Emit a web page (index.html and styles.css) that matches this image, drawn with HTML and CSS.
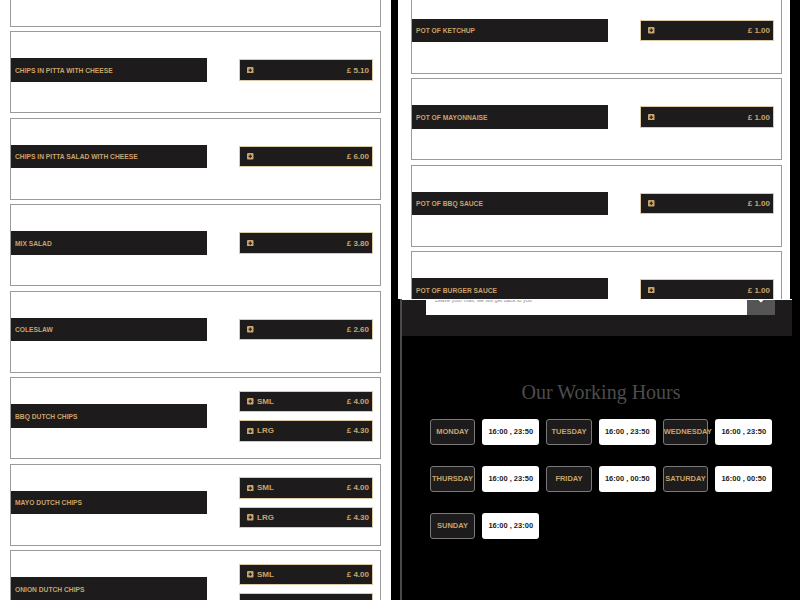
FILE: index.html
```html
<!DOCTYPE html>
<html lang="en">
<head>
<meta charset="utf-8">
<title>Menu</title>
<link rel="stylesheet" href="styles.css">
</head>
<body>
<div class="page">
  <section class="menu-left">
    <div class="list list-left">
      <div class="item"></div>
      <div class="item">
        <div class="item-name">CHIPS IN PITTA WITH CHEESE</div>
        <div class="item-prices">
          <div class="price-btn"><svg class="plus" viewBox="0 0 7 7"><rect width="7" height="7" rx="1" fill="#c9a46c"/><path d="M3.5 1.6v3.8M1.6 3.5h3.8" stroke="#1d1b1b" stroke-width="1.3"/></svg><span class="size"></span><span class="price">£ 5.10</span></div>
        </div>
      </div>
      <div class="item">
        <div class="item-name">CHIPS IN PITTA SALAD WITH CHEESE</div>
        <div class="item-prices">
          <div class="price-btn"><svg class="plus" viewBox="0 0 7 7"><rect width="7" height="7" rx="1" fill="#c9a46c"/><path d="M3.5 1.6v3.8M1.6 3.5h3.8" stroke="#1d1b1b" stroke-width="1.3"/></svg><span class="size"></span><span class="price">£ 6.00</span></div>
        </div>
      </div>
      <div class="item">
        <div class="item-name">MIX SALAD</div>
        <div class="item-prices">
          <div class="price-btn"><svg class="plus" viewBox="0 0 7 7"><rect width="7" height="7" rx="1" fill="#c9a46c"/><path d="M3.5 1.6v3.8M1.6 3.5h3.8" stroke="#1d1b1b" stroke-width="1.3"/></svg><span class="size"></span><span class="price">£ 3.80</span></div>
        </div>
      </div>
      <div class="item">
        <div class="item-name">COLESLAW</div>
        <div class="item-prices">
          <div class="price-btn"><svg class="plus" viewBox="0 0 7 7"><rect width="7" height="7" rx="1" fill="#c9a46c"/><path d="M3.5 1.6v3.8M1.6 3.5h3.8" stroke="#1d1b1b" stroke-width="1.3"/></svg><span class="size"></span><span class="price">£ 2.60</span></div>
        </div>
      </div>
      <div class="item">
        <div class="item-name">BBQ DUTCH CHIPS</div>
        <div class="item-prices">
          <div class="price-btn"><svg class="plus" viewBox="0 0 7 7"><rect width="7" height="7" rx="1" fill="#c9a46c"/><path d="M3.5 1.6v3.8M1.6 3.5h3.8" stroke="#1d1b1b" stroke-width="1.3"/></svg><span class="size">SML</span><span class="price">£ 4.00</span></div>
          <div class="price-btn"><svg class="plus" viewBox="0 0 7 7"><rect width="7" height="7" rx="1" fill="#c9a46c"/><path d="M3.5 1.6v3.8M1.6 3.5h3.8" stroke="#1d1b1b" stroke-width="1.3"/></svg><span class="size">LRG</span><span class="price">£ 4.30</span></div>
        </div>
      </div>
      <div class="item">
        <div class="item-name">MAYO DUTCH CHIPS</div>
        <div class="item-prices">
          <div class="price-btn"><svg class="plus" viewBox="0 0 7 7"><rect width="7" height="7" rx="1" fill="#c9a46c"/><path d="M3.5 1.6v3.8M1.6 3.5h3.8" stroke="#1d1b1b" stroke-width="1.3"/></svg><span class="size">SML</span><span class="price">£ 4.00</span></div>
          <div class="price-btn"><svg class="plus" viewBox="0 0 7 7"><rect width="7" height="7" rx="1" fill="#c9a46c"/><path d="M3.5 1.6v3.8M1.6 3.5h3.8" stroke="#1d1b1b" stroke-width="1.3"/></svg><span class="size">LRG</span><span class="price">£ 4.30</span></div>
        </div>
      </div>
      <div class="item">
        <div class="item-name">ONION DUTCH CHIPS</div>
        <div class="item-prices">
          <div class="price-btn"><svg class="plus" viewBox="0 0 7 7"><rect width="7" height="7" rx="1" fill="#c9a46c"/><path d="M3.5 1.6v3.8M1.6 3.5h3.8" stroke="#1d1b1b" stroke-width="1.3"/></svg><span class="size">SML</span><span class="price">£ 4.00</span></div>
          <div class="price-btn"></div>
        </div>
      </div>
    </div>
  </section>

  <div class="right-col">
    <section class="menu-right">
      <div class="list list-right">
        <div class="item">
          <div class="item-name">POT OF KETCHUP</div>
          <div class="item-prices">
            <div class="price-btn"><svg class="plus" viewBox="0 0 7 7"><rect width="7" height="7" rx="1" fill="#c9a46c"/><path d="M3.5 1.6v3.8M1.6 3.5h3.8" stroke="#1d1b1b" stroke-width="1.3"/></svg><span class="size"></span><span class="price">£ 1.00</span></div>
          </div>
        </div>
        <div class="item">
          <div class="item-name">POT OF MAYONNAISE</div>
          <div class="item-prices">
            <div class="price-btn"><svg class="plus" viewBox="0 0 7 7"><rect width="7" height="7" rx="1" fill="#c9a46c"/><path d="M3.5 1.6v3.8M1.6 3.5h3.8" stroke="#1d1b1b" stroke-width="1.3"/></svg><span class="size"></span><span class="price">£ 1.00</span></div>
          </div>
        </div>
        <div class="item">
          <div class="item-name">POT OF BBQ SAUCE</div>
          <div class="item-prices">
            <div class="price-btn"><svg class="plus" viewBox="0 0 7 7"><rect width="7" height="7" rx="1" fill="#c9a46c"/><path d="M3.5 1.6v3.8M1.6 3.5h3.8" stroke="#1d1b1b" stroke-width="1.3"/></svg><span class="size"></span><span class="price">£ 1.00</span></div>
          </div>
        </div>
        <div class="item">
          <div class="item-name">POT OF BURGER SAUCE</div>
          <div class="item-prices">
            <div class="price-btn"><svg class="plus" viewBox="0 0 7 7"><rect width="7" height="7" rx="1" fill="#c9a46c"/><path d="M3.5 1.6v3.8M1.6 3.5h3.8" stroke="#1d1b1b" stroke-width="1.3"/></svg><span class="size"></span><span class="price">£ 1.00</span></div>
          </div>
        </div>
      </div>
    </section>

    <section class="lower">
      <div class="newsletter">
        <div class="news-input"><span>Leave your mail, we will get back to you</span></div>
        <div class="news-btn"><svg viewBox="0 0 28 15" width="28" height="15"><path d="M10 -3l4 4 4-4" fill="none" stroke="#fff" stroke-width="2.2"/></svg></div>
      </div>
      <div class="hours">
        <h2 class="hours-title">Our Working Hours</h2>
        <div class="hours-grid">
          <div class="day">MONDAY</div><div class="time">16:00 , 23:50</div>
          <div class="day">TUESDAY</div><div class="time">16:00 , 23:50</div>
          <div class="day">WEDNESDAY</div><div class="time">16:00 , 23:50</div>
          <div class="day">THURSDAY</div><div class="time">16:00 , 23:50</div>
          <div class="day">FRIDAY</div><div class="time">16:00 , 00:50</div>
          <div class="day">SATURDAY</div><div class="time">16:00 , 00:50</div>
          <div class="day">SUNDAY</div><div class="time">16:00 , 23:00</div>
        </div>
      </div>
    </section>
  </div>
</div>
</body>
</html>
```

FILE: styles.css
```css
* { box-sizing: border-box; }

html, body {
  margin: 0;
  padding: 0;
  background: #000;
  width: 800px;
  height: 600px;
  overflow: hidden;
  font-family: "Liberation Sans", Arial, sans-serif;
}

.page {
  display: grid;
  grid-template-columns: 391px 409px;
  height: 600px;
}

.menu-left {
  background: #fff;
  padding: 0 10px;
  height: 600px;
  overflow: hidden;
}

.list-left { margin-top: -55.5px; }

.right-col {
  display: flex;
  flex-direction: column;
  height: 600px;
}

.menu-right {
  background: #fff;
  margin-left: 7px;
  margin-right: 10px;
  padding: 0 8px 0 13px;
  height: 299px;
  flex: none;
  overflow: hidden;
}

.list-right { margin-top: -8.5px; }

.item {
  height: 82px;
  margin-bottom: 4.5px;
  border: 1px solid #9a9a9a;
  background: #fff;
  display: flex;
  align-items: center;
  justify-content: space-between;
  padding: 0 7px 4px 0;
}

.item-name {
  width: 196px;
  height: 23.5px;
  background: #1d1b1b;
  color: #c9a46c;
  font-weight: bold;
  font-size: 6.7px;
  display: flex;
  align-items: center;
  padding-left: 4px;
  white-space: nowrap;
}

.item-prices {
  display: flex;
  flex-direction: column;
  gap: 8px;
}

.price-btn {
  width: 134px;
  height: 21.5px;
  background: #1d1b1b;
  border: 1px solid #dccaa8;
  display: flex;
  align-items: center;
  padding: 0 3px 0 7px;
  color: #c9a46c;
  font-weight: bold;
  font-size: 8px;
}

.plus {
  width: 6.5px;
  height: 6.5px;
  flex: none;
}

.size {
  margin-left: 3.5px;
  flex: 1;
}

.price { white-space: nowrap; }

.lower {
  flex: 1;
  margin-left: 9px;
  border-left: 2px solid #4a4a4a;
  background: #000;
  display: flex;
  flex-direction: column;
}

.newsletter {
  border-top: 1px solid #fff;
  background: #1d1b1b;
  height: 37px;
  margin-right: 8px;
  padding: 0 17px 0 24px;
  display: flex;
  align-items: flex-start;
}

.news-input {
  width: 321px;
  height: 15px;
  background: #fff;
  overflow: hidden;
}

.news-input span {
  display: block;
  margin-top: -3px;
  padding-left: 9px;
  font-size: 5.5px;
  line-height: 6px;
  color: #8a8a8a;
  white-space: nowrap;
}

.news-btn {
  width: 28px;
  height: 15px;
  background: #555;
}

.news-btn svg { display: block; }

.hours {
  display: flex;
  flex-direction: column;
  align-items: center;
}

.hours-title {
  margin: 45px 0 15px;
  font-family: "Liberation Serif", "Times New Roman", serif;
  font-weight: normal;
  font-size: 20px;
  line-height: 23px;
  color: #4d4d4d;
}

.hours-grid {
  display: grid;
  grid-template-columns: 45.5px 57px 45.5px 57px 45.5px 57px;
  column-gap: 7px;
  row-gap: 21px;
}

.day, .time {
  height: 26px;
  border-radius: 3px;
  font-weight: bold;
  font-size: 7.5px;
  line-height: 24px;
  text-align: center;
  white-space: nowrap;
}

.day {
  background: #1d1b1b;
  border: 1px solid #7a7a7a;
  color: #c9a46c;
}

.time {
  background: #fff;
  color: #222;
  line-height: 26px;
}
```
